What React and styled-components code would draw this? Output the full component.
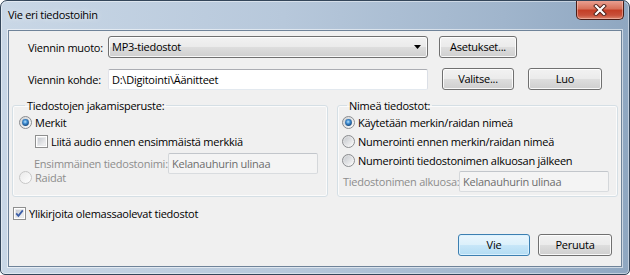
import React, { useId } from "react";
import styled, { createGlobalStyle } from "styled-components";

const GlobalStyle = createGlobalStyle`
  html, body { margin: 0; padding: 0; }
  body {
    font-family: "Open Sans", "Noto Sans", sans-serif;
    font-size: 11px;
    letter-spacing: -0.25px;
    line-height: 14px;
    color: #000;
    background: #fff;
  }
  * { box-sizing: border-box; }
`;

const Window = styled.div`
  width: 630px;
  height: 275px;
  border: 1px solid #34465a;
  border-radius: 7px 7px 5px 5px;
  background: linear-gradient(to right, #c9d7e6 0%, #b7c8db 45%, #a0b5cc 80%, #8fa7c1 100%);
  box-shadow: inset 0 0 0 1px rgba(255, 255, 255, 0.45);
  display: flex;
  flex-direction: column;
  padding: 0 7px 7px 7px;
  overflow: hidden;
`;

const TitleBar = styled.div`
  height: 29px;
  display: flex;
  align-items: flex-start;
  justify-content: space-between;
`;

const Title = styled.div`
  line-height: 28px;
  font-size: 11px;
  letter-spacing: -0.3px;
  text-shadow: 0 0 6px rgba(255, 255, 255, 0.9);
`;

const CloseButton = styled.div`
  width: 48px;
  height: 20px;
  margin-top: -1px;
  margin-right: -2px;
  border: 1px solid #4a1d16;
  border-top: none;
  border-radius: 0 0 5px 5px;
  background: linear-gradient(#eba597 0%, #d8725b 45%, #c43f27 55%, #c8503a 80%, #dc866d 100%);
  box-shadow: inset 0 0 0 1px rgba(255, 220, 210, 0.45);
  display: flex;
  align-items: center;
  justify-content: center;
`;

const Client = styled.div`
  flex: 1;
  background: #f0f0f0;
  border: 1px solid #6f8399;
  box-shadow: 0 0 0 1px rgba(255, 255, 255, 0.55);
  display: flex;
  flex-direction: column;
  padding-top: 5px;
`;

const Row = styled.div`
  display: flex;
  align-items: center;
  padding-left: ${(p) => p.$indent || 0}px;
  margin-top: ${(p) => p.$top || 0}px;
  height: ${(p) => p.$h || 22}px;
`;

const FieldLabel = styled.span`
  width: ${(p) => p.$w}px;
  flex: none;
  margin-left: ${(p) => p.$ml || 0}px;
  color: ${(p) => (p.$disabled ? "#8d8d8d" : "#000")};
  white-space: nowrap;
  line-height: 13px;
`;

const winGradient = `
  background: linear-gradient(#f2f2f2 0%, #ebebeb 48%, #dddddd 52%, #cfcfcf 100%);
  box-shadow: inset 0 0 0 1px rgba(255, 255, 255, 0.85);
`;

const Combo = styled.div`
  width: 320px;
  height: 22px;
  border: 1px solid #707070;
  border-radius: 3px;
  ${winGradient}
  display: flex;
  align-items: center;
  justify-content: space-between;
  padding: 0 6px 0 3px;
`;

const Button = styled.button`
  width: ${(p) => p.$w}px;
  height: 22px;
  margin-left: ${(p) => p.$ml || 0}px;
  padding: 0;
  font: inherit;
  letter-spacing: inherit;
  color: #000;
  border: 1px solid ${(p) => (p.$default ? "#3c7fb1" : "#707070")};
  border-radius: 3px;
  ${(p) =>
    p.$default
      ? `background: linear-gradient(#eaf6fd 0%, #dcf0fb 48%, #c7e6f8 52%, #b3dcf3 100%);
         box-shadow: inset 0 0 0 1px rgba(220, 242, 255, 0.9);`
      : winGradient}
`;

const TextInput = styled.input`
  width: ${(p) => p.$w}px;
  height: 21px;
  padding: 0 3px;
  font: inherit;
  letter-spacing: inherit;
  border: 1px solid;
  border-radius: 2px;
  border-color: ${(p) =>
    p.disabled ? "#c2c6cb #d4d7da #d9dcdf #d4d7da" : "#abadb3 #dbdfe6 #e3e9ef #e2e3ea"};
  background: ${(p) => (p.disabled ? "#f4f4f4" : "#fff")};
  color: ${(p) => (p.disabled ? "#6d6d6d" : "#000")};
  outline: none;
  &:disabled { -webkit-text-fill-color: #6d6d6d; }
`;

const Groups = styled.div`
  display: flex;
  gap: 9px;
  padding: 0 3px;
  margin-top: 8px;
`;

const Group = styled.fieldset`
  margin: 0;
  width: ${(p) => (p.$w ? `${p.$w}px` : "auto")};
  flex: ${(p) => (p.$w ? "none" : "1")};
  height: 99px;
  padding: 0 0 0 ${(p) => p.$pl}px;
  border: 1px solid #d5dfe5;
  border-radius: 3px;
  box-shadow: inset 0 0 0 1px #fbfbfb;
  display: flex;
  flex-direction: column;
`;

const Legend = styled.legend`
  padding: 0 2px;
  margin-left: ${(p) => p.$ml}px;
  line-height: 15px;
`;

const Option = styled.label`
  display: flex;
  align-items: center;
  gap: 3px;
  height: ${(p) => p.$h || 19}px;
  margin-left: ${(p) => p.$ml || 0}px;
  margin-top: ${(p) => p.$top || 0}px;
  color: ${(p) => (p.$disabled ? "#8d8d8d" : "#000")};
  white-space: nowrap;
`;

const CheckRow = styled(Option)`
  padding-left: 4px;
  margin-top: 9px;
  height: 15px;
`;

const Footer = styled.div`
  margin-top: auto;
  display: flex;
  justify-content: flex-end;
  gap: 8px;
  padding: 0 9px 10px 0;
`;

function Radio({ checked, disabled }) {
  const id = useId().replace(/:/g, "");
  return (
    <svg width="13" height="13" viewBox="0 0 13 13" style={{ flex: "none" }}>
      <defs>
        <linearGradient id={`o${id}`} x1="0" y1="0" x2="1" y2="1">
          <stop offset="0" stopColor={disabled ? "#e8e8e8" : "#d0d2d4"} />
          <stop offset="1" stopColor="#ffffff" />
        </linearGradient>
        <linearGradient id={`i${id}`} x1="0" y1="0" x2="1" y2="1">
          <stop offset="0" stopColor={disabled ? "#ececec" : "#c6c9ce"} />
          <stop offset="1" stopColor={disabled ? "#fbfbfb" : "#f7f7f7"} />
        </linearGradient>
        <radialGradient id={`d${id}`} cx="0.45" cy="0.4" r="0.65">
          <stop offset="0" stopColor="#b9e3fb" />
          <stop offset="0.45" stopColor="#3c8ad0" />
          <stop offset="1" stopColor="#123f70" />
        </radialGradient>
      </defs>
      <circle cx="6.5" cy="6.5" r="6" fill={`url(#o${id})`} stroke={disabled ? "#c6c6c6" : "#8a8c8f"} />
      <circle cx="6.5" cy="6.5" r="4.3" fill={`url(#i${id})`} />
      {checked && <circle cx="6.5" cy="6.5" r="3.4" fill={`url(#d${id})`} />}
    </svg>
  );
}

function Checkbox({ checked }) {
  const id = useId().replace(/:/g, "");
  return (
    <svg width="13" height="13" viewBox="0 0 13 13" style={{ flex: "none" }}>
      <defs>
        <linearGradient id={`c${id}`} x1="0" y1="0" x2="1" y2="1">
          <stop offset="0" stopColor="#c4c8cf" />
          <stop offset="1" stopColor="#f6f6f6" />
        </linearGradient>
      </defs>
      <rect x="0.5" y="0.5" width="12" height="12" fill="#fff" stroke="#8e8f8f" />
      <rect x="2.5" y="2.5" width="8" height="8" fill={`url(#c${id})`} stroke="#e9eaec" />
      {checked && (
        <path d="M3.2 6.4 L5.4 8.9 L9.8 3.4" fill="none" stroke="#3b5ea8" strokeWidth="1.7" />
      )}
    </svg>
  );
}

function CloseGlyph() {
  return (
    <svg width="14" height="12" viewBox="0 0 14 12">
      <path d="M3 2 L11 10 M11 2 L3 10" stroke="#4b2019" strokeWidth="4" strokeLinecap="square" />
      <path d="M3 2 L11 10 M11 2 L3 10" stroke="#ffffff" strokeWidth="2.2" strokeLinecap="square" />
    </svg>
  );
}

function ArrowDown() {
  return (
    <svg width="7" height="4" viewBox="0 0 7 4">
      <path d="M0 0 H7 L3.5 4 Z" fill="#000" />
    </svg>
  );
}

export default function App() {
  return (
    <>
      <GlobalStyle />
      <Window>
        <TitleBar>
          <Title>Vie eri tiedostoihin</Title>
          <CloseButton>
            <CloseGlyph />
          </CloseButton>
        </TitleBar>
        <Client>
          <Row $indent={19}>
            <FieldLabel $w={80}>Viennin muoto:</FieldLabel>
            <Combo>
              <span>MP3-tiedostot</span>
              <ArrowDown />
            </Combo>
            <Button $w={78} $ml={11}>Asetukset...</Button>
          </Row>
          <Row $indent={19} $top={10}>
            <FieldLabel $w={80}>Viennin kohde:</FieldLabel>
            <TextInput $w={320} readOnly value="D:\Digitointi\Äänitteet" />
            <Button $w={72} $ml={14}>Valitse...</Button>
            <Button $w={74} $ml={14}>Luo</Button>
          </Row>
          <Groups>
            <Group $w={316} $pl={6}>
              <Legend $ml={6}>Tiedostojen jakamisperuste:</Legend>
              <Option>
                <Radio checked />
                Merkit
              </Option>
              <Option $ml={16}>
                <Checkbox />
                Liitä audio ennen ensimmäistä merkkiä
              </Option>
              <Row $top={2} $h={21}>
                <FieldLabel $w={134} $ml={15} $disabled>
                  Ensimmäinen tiedostonimi:
                </FieldLabel>
                <TextInput $w={150} disabled value="Kelanauhurin ulinaa" />
              </Row>
              <Option $disabled $h={13} $top={-3}>
                <Radio disabled />
                Raidat
              </Option>
            </Group>
            <Group $pl={4}>
              <Legend $ml={5}>Nimeä tiedostot:</Legend>
              <Option>
                <Radio checked />
                Käytetään merkin/raidan nimeä
              </Option>
              <Option>
                <Radio />
                Numerointi ennen merkin/raidan nimeä
              </Option>
              <Option>
                <Radio />
                Numerointi tiedostonimen alkuosan jälkeen
              </Option>
              <Row $top={1} $h={21}>
                <FieldLabel $w={116} $ml={1} $disabled>
                  Tiedostonimen alkuosa:
                </FieldLabel>
                <TextInput $w={150} disabled value="Kelanauhurin ulinaa" />
              </Row>
            </Group>
          </Groups>
          <CheckRow>
            <Checkbox checked />
            Ylikirjoita olemassaolevat tiedostot
          </CheckRow>
          <Footer>
            <Button $w={72} $default>Vie</Button>
            <Button $w={74}>Peruuta</Button>
          </Footer>
        </Client>
      </Window>
    </>
  );
}
